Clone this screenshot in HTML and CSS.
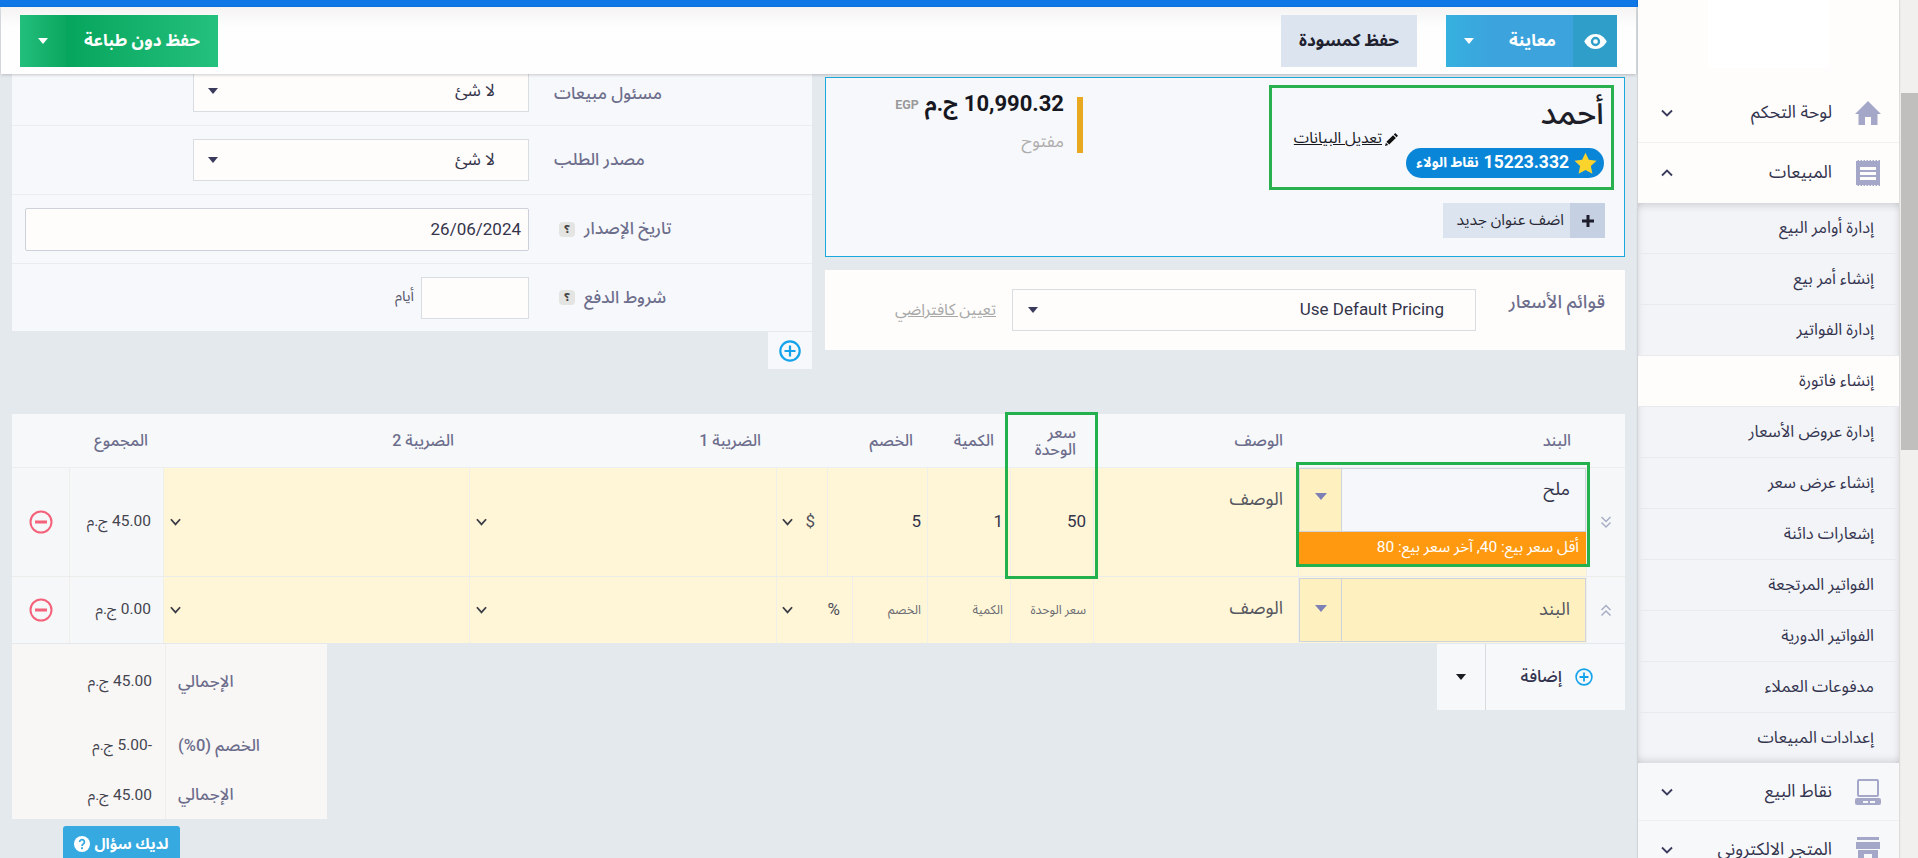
FILE: index.html
```html
<!DOCTYPE html>
<html lang="ar" dir="rtl">
<head>
<meta charset="utf-8">
<title>إنشاء فاتورة</title>
<link rel="stylesheet" href="styles.css">
</head>
<body>
<div class="app">
  <div class="scrollbar">
    <div class="scroll-up"></div>
    <div class="scroll-thumb"></div>
    <div class="scroll-down"><span class="caret caret-gray"></span></div>
  </div>

  <nav class="sidebar">
    <div class="logo-box"></div>
    <a class="nav-row">
      <svg class="nav-icon" viewBox="0 0 26 24"><path fill="#a5a7c8" d="M13 0 26 13h-3.500v11H16v-8h-6v8H3.500V13H0z"/></svg>
      <span class="nav-text">لوحة التحكم</span>
      <svg class="nav-chev" viewBox="0 0 12 8"><path d="M1 1.500 6 6.500l5-5" fill="none" stroke="#3a3a5c" stroke-width="1.800"/></svg>
    </a>
    <a class="nav-row nav-row-open">
      <svg class="nav-icon" viewBox="0 0 24 26"><path fill="#a5a7c8" d="M0 1h1.500V0H3v1h1.500V0H6v1h1.500V0H9v1h1.500V0H12v1h1.500V0H15v1h1.500V0H18v1h1.500V0H21v1h1.500V0H24v26h-1.500v-1H21v1h-1.500v-1H18v1h-1.500v-1H15v1h-1.500v-1H12v1h-1.500v-1H9v1H7.500v-1H6v1H4.500v-1H3v1H1.500v-1H0z"/><path fill="#fefdfb" d="M4 7h16v3H4zM4 12h16v3H4zM4 17h16v3H4z"/></svg>
      <span class="nav-text">المبيعات</span>
      <svg class="nav-chev" viewBox="0 0 12 8"><path d="M1 6.500 6 1.500l5 5" fill="none" stroke="#3a3a5c" stroke-width="1.800"/></svg>
    </a>
    <div class="subnav">
      <a class="sub-item">إدارة أوامر البيع</a>
      <a class="sub-item">إنشاء أمر بيع</a>
      <a class="sub-item">إدارة الفواتير</a>
      <a class="sub-item sub-active">إنشاء فاتورة</a>
      <a class="sub-item">إدارة عروض الأسعار</a>
      <a class="sub-item">إنشاء عرض سعر</a>
      <a class="sub-item">إشعارات دائنة</a>
      <a class="sub-item">الفواتير المرتجعة</a>
      <a class="sub-item">الفواتير الدورية</a>
      <a class="sub-item">مدفوعات العملاء</a>
      <a class="sub-item">إعدادات المبيعات</a>
    </div>
    <a class="nav-row nav-row-alt">
      <svg class="nav-icon" viewBox="0 0 26 26"><path fill="#a5a7c8" d="M4 0h18a2 2 0 0 1 2 2v14a2 2 0 0 1-2 2H4a2 2 0 0 1-2-2V2a2 2 0 0 1 2-2zm0 2v14h18V2zM2 19h22a2 2 0 0 1 2 2v3a2 2 0 0 1-2 2H2a2 2 0 0 1-2-2v-3a2 2 0 0 1 2-2zm6 3v2h5v-2zm7 0v2h5v-2z" fill-rule="evenodd"/></svg>
      <span class="nav-text">نقاط البيع</span>
      <svg class="nav-chev" viewBox="0 0 12 8"><path d="M1 1.500 6 6.500l5-5" fill="none" stroke="#3a3a5c" stroke-width="1.800"/></svg>
    </a>
    <a class="nav-row nav-row-alt">
      <svg class="nav-icon" viewBox="0 0 24 26"><path fill="#a5a7c8" d="M1 0h22v3H1zM0 5h24v7H0zM2 13h20v13h-6v-9H8v9H2z"/></svg>
      <span class="nav-text">المتجر الالكتروني</span>
      <svg class="nav-chev" viewBox="0 0 12 8"><path d="M1 1.500 6 6.500l5-5" fill="none" stroke="#3a3a5c" stroke-width="1.800"/></svg>
    </a>
  </nav>

  <main class="main">
    <div class="top-line"></div>
    <header class="toolbar">
      <div class="btn-split btn-preview">
        <span class="btn-eye">
          <svg class="eye-icon" viewBox="0 0 24 16"><path fill="#fff" fill-rule="evenodd" d="M12 0c5.500 0 9.700 3.700 12 8-2.300 4.300-6.500 8-12 8S2.300 12.300 0 8c2.300-4.300 6.500-8 12-8zm0 3a5 5 0 1 0 0 10 5 5 0 0 0 0-10zm0 2.500a2.500 2.500 0 1 1 0 5 2.500 2.500 0 0 1 0-5z"/></svg>
        </span>
        <span class="btn-preview-main">معاينة</span>
        <span class="btn-preview-drop"><span class="caret caret-white"></span></span>
      </div>
      <div class="btn-draft">حفظ كمسودة</div>
      <div class="btn-split btn-save">
        <span class="btn-save-main">حفظ دون طباعة</span>
        <span class="btn-save-drop"><span class="caret caret-white"></span></span>
      </div>
    </header>

    <section class="top-grid">
      <div class="col-customer">
        <div class="customer-panel">
          <div class="customer-side">
            <div class="customer-box">
              <div class="customer-name">أحمد</div>
              <a class="edit-link">
                <svg class="pencil" viewBox="0 0 14 14"><path fill="#111" d="M11 0l3 3-1.500 1.500-3-3zM8.700 2.300l3 3L4.500 12.500l-3-3zM1 10.500 3.500 13 0 14z"/></svg>
                <span class="edit-text">تعديل البيانات</span>
              </a>
              <div class="points-pill">
                <svg class="star" viewBox="0 0 24 24"><path fill="#fbd32d" d="M12 .8l3.500 7.400 8 1-5.900 5.500 1.600 8L12 18.700l-7.200 4 1.600-8L.5 9.200l8-1z"/></svg>
                <span class="points-num">15223.332</span>
                <span class="points-word">نقاط الولاء</span>
              </div>
            </div>
            <div class="add-address">
              <span class="add-address-plus">
                <svg class="plus-black" viewBox="0 0 12 12"><path fill="#1d1d2b" d="M4.500 0h3v4.500H12v3H7.500V12h-3V7.500H0v-3h4.500z"/></svg>
              </span>
              <span class="add-address-text">اضف عنوان جديد</span>
            </div>
          </div>
          <div class="amount-block">
            <div class="amount-line"><span class="amount">10,990.32 ج.م</span><span class="amount-cur">EGP</span></div>
            <div class="amount-status">مفتوح</div>
          </div>
        </div>
        <div class="pricelist-panel">
          <div class="pricelist-label">قوائم الأسعار</div>
          <div class="field-select pricelist-select"><span>Use Default Pricing</span><span class="caret caret-dark"></span></div>
          <a class="set-default">تعيين كافتراضي</a>
        </div>
      </div>

      <div class="col-meta">
        <div class="meta-panel">
          <div class="meta-row meta-row-first">
            <label class="meta-label">مسئول مبيعات</label>
            <div class="field-select meta-select"><span>لا شئ</span><span class="caret caret-dark"></span></div>
          </div>
          <div class="meta-row">
            <label class="meta-label">مصدر الطلب</label>
            <div class="field-select meta-select"><span>لا شئ</span><span class="caret caret-dark"></span></div>
          </div>
          <div class="meta-row">
            <label class="meta-label">تاريخ الإصدار <span class="help-chip">؟</span></label>
            <div class="date-input">26/06/2024</div>
          </div>
          <div class="meta-row meta-row-last">
            <label class="meta-label">شروط الدفع <span class="help-chip">؟</span></label>
            <div class="days-input"></div>
            <span class="days-unit">أيام</span>
          </div>
        </div>
        <div class="meta-add">
          <svg class="circle-plus" viewBox="0 0 20 20"><circle cx="10" cy="10" r="8.800" fill="none" stroke="#14a3ea" stroke-width="2"/><path fill="#14a3ea" d="M9 5h2v4h4v2h-4v4H9v-4H5V9h4z"/></svg>
        </div>
      </div>
    </section>

    <section class="table-wrap">
      <div class="t-row t-head">
        <div class="c"></div>
        <div class="c h">البند</div>
        <div class="c h">الوصف</div>
        <div class="c h h-price">سعر<br>الوحدة</div>
        <div class="c h h-qty">الكمية</div>
        <div class="c h h-disc">الخصم</div>
        <div class="c h">الضريبة 1</div>
        <div class="c h">الضريبة 2</div>
        <div class="c h">المجموع</div>
        <div class="c"></div>
      </div>

      <div class="t-row t-row-1">
        <div class="c handle"><svg class="dbl" viewBox="0 0 12 14"><path d="M1.500 2 6 6.500 10.500 2M1.500 7.500 6 12l4.500-4.500" fill="none" stroke="#a8aec6" stroke-width="1.500"/></svg></div>
        <div class="c item-cell">
          <div class="item-input item-filled">
            <span class="item-text">ملح</span>
            <span class="item-drop"><span class="caret caret-blue"></span></span>
          </div>
          <div class="item-hint">أقل سعر بيع: 40, آخر سعر بيع: 80</div>
        </div>
        <div class="c y v-desc">الوصف</div>
        <div class="c y v-num">50</div>
        <div class="c y v-num">1</div>
        <div class="c y disc-cell">
          <div class="disc-val">5</div>
          <div class="disc-type disc-type-a"><span class="disc-sym">$</span><svg class="sel-chev" viewBox="0 0 12 8"><path d="M1 1 6 6.500 11 1" fill="none" stroke="#3d3d48" stroke-width="2"/></svg></div>
        </div>
        <div class="c y tax"><svg class="sel-chev" viewBox="0 0 12 8"><path d="M1 1 6 6.500 11 1" fill="none" stroke="#3d3d48" stroke-width="2"/></svg></div>
        <div class="c y tax"><svg class="sel-chev" viewBox="0 0 12 8"><path d="M1 1 6 6.500 11 1" fill="none" stroke="#3d3d48" stroke-width="2"/></svg></div>
        <div class="c total">45.00 ج.م</div>
        <div class="c del"><svg class="minus" viewBox="0 0 24 24"><circle cx="12" cy="12" r="10.500" fill="none" stroke="#f4617a" stroke-width="2"/><path fill="#f4617a" d="M6 10.500h12v3H6z"/></svg></div>
      </div>

      <div class="t-row t-row-2">
        <div class="c handle"><svg class="dbl" viewBox="0 0 12 14"><path d="M1.500 7 6 2.500 10.500 7M1.500 12.500 6 8l4.500 4.500" fill="none" stroke="#a8aec6" stroke-width="1.500"/></svg></div>
        <div class="c item-cell">
          <div class="item-input item-empty">
            <span class="item-text item-ph">البند</span>
            <span class="item-drop"><span class="caret caret-blue"></span></span>
          </div>
        </div>
        <div class="c y v-desc">الوصف</div>
        <div class="c y v-ph">سعر الوحدة</div>
        <div class="c y v-ph">الكمية</div>
        <div class="c y disc-cell">
          <div class="disc-val disc-val-2">الخصم</div>
          <div class="disc-type disc-type-b"><span class="disc-sym">%</span><svg class="sel-chev" viewBox="0 0 12 8"><path d="M1 1 6 6.500 11 1" fill="none" stroke="#3d3d48" stroke-width="2"/></svg></div>
        </div>
        <div class="c y tax"><svg class="sel-chev" viewBox="0 0 12 8"><path d="M1 1 6 6.500 11 1" fill="none" stroke="#3d3d48" stroke-width="2"/></svg></div>
        <div class="c y tax"><svg class="sel-chev" viewBox="0 0 12 8"><path d="M1 1 6 6.500 11 1" fill="none" stroke="#3d3d48" stroke-width="2"/></svg></div>
        <div class="c total">0.00 ج.م</div>
        <div class="c del"><svg class="minus" viewBox="0 0 24 24"><circle cx="12" cy="12" r="10.500" fill="none" stroke="#f4617a" stroke-width="2"/><path fill="#f4617a" d="M6 10.500h12v3H6z"/></svg></div>
      </div>

      <div class="mark mark-price"></div>
      <div class="mark mark-item"></div>
    </section>

    <section class="below">
      <div class="add-btn">
        <span class="add-main">
          <svg class="circle-plus-sm" viewBox="0 0 20 20"><circle cx="10" cy="10" r="8.800" fill="none" stroke="#14a3ea" stroke-width="1.800"/><path fill="#14a3ea" d="M9 5h2v4h4v2h-4v4H9v-4H5V9h4z"/></svg>
          إضافة
        </span>
        <span class="add-drop"><span class="caret caret-black"></span></span>
      </div>
      <div class="totals">
        <div class="tot-label tot-h1">الإجمالي</div><div class="tot-val tot-h1">45.00 ج.م</div>
        <div class="tot-label tot-h2">الخصم (0%)</div><div class="tot-val tot-h2">-5.00 ج.م</div>
        <div class="tot-label tot-h3">الإجمالي</div><div class="tot-val tot-h3">45.00 ج.م</div>
      </div>
    </section>

    <div class="help-row">
      <a class="help-btn">
        <span>لديك سؤال</span>
        <svg class="help-icon" viewBox="0 0 20 20"><circle cx="10" cy="10" r="10" fill="#fff"/><path d="M7 7.500a3 3 0 1 1 4.600 2.500c-1 .7-1.600 1.200-1.600 2.500" fill="none" stroke="#35a9e0" stroke-width="2.200"/><rect x="8.800" y="14" width="2.400" height="2.400" fill="#35a9e0"/></svg>
      </a>
    </div>
  </main>
</div>
</body>
</html>
```
FILE: styles.css
```css
* { box-sizing: border-box; }
html, body { margin: 0; height: 858px; overflow: hidden; }
body { font-family: Roboto, "Noto Sans Arabic", sans-serif; font-size: 16px; line-height: 1.25; color: #33334f; background: #e4e9ed; }
a { display: block; text-decoration: none; color: inherit; }

.app { display: grid; grid-template-columns: 19px 261px 1638px; height: 858px; overflow: hidden; }

/* scrollbar */
.scrollbar { background: #f1f0ef; display: flex; flex-direction: column; }
.scroll-up { height: 93px; }
.scroll-thumb { height: 357px; background: #c1bfbd; width: 17px; }
.scroll-down { margin-top: auto; height: 17px; display: flex; align-items: center; justify-content: center; }

/* carets */
.caret { display: inline-block; width: 0; height: 0; border-style: solid; border-width: 6px 5px 0; border-color: #3a3a5c transparent transparent; flex: none; }
.caret-white { border-top-color: #fff; }
.caret-dark { border-top-color: #3a3a5c; }
.caret-black { border-top-color: #1b1b22; }
.caret-blue { border-top-color: #7d80b5; border-width: 7px 6px 0; }
.caret-gray { border-top-color: #555; }

/* sidebar */
.sidebar { background: #fefdfb; box-shadow: 0 0 2px rgba(0,0,0,.25); position: relative; z-index: 3; }
.logo-box { width: 121px; height: 68px; background: #fff; margin: 0 auto 15px; }
.nav-row { height: 60px; display: flex; align-items: center; padding-right: 18px; padding-left: 23px; border-bottom: 1px solid #f0f0f0; }
.nav-row-open { border-bottom: 0; }
.nav-row-alt { background: #f7f8fa; height: 58px; }
.nav-icon { width: 26px; height: 26px; flex: none; }
.nav-text { font-size: 17.500px; margin-right: 23px; color: #34344f; }
.nav-chev { width: 12px; height: 8px; margin-right: auto; }
.subnav { background: #f2f4f8; box-shadow: inset 0 8px 8px -6px rgba(0,0,0,.16), inset 0 -8px 8px -6px rgba(0,0,0,.14), inset 8px 0 8px -8px rgba(0,0,0,.1), inset -8px 0 8px -8px rgba(0,0,0,.1); }
.sub-item { height: 51px; display: flex; align-items: center; padding-right: 25px; font-size: 16.500px; border-bottom: 1px solid #e8eaee; color: #34344f; }
.sub-item:last-child { border-bottom: 0; height: 50px; }
.sub-active { background: #fefdfb; }

/* main */
.main { background: #e4e9ed; display: flex; flex-direction: column; height: 858px; overflow: hidden; }
.top-line { height: 7px; background: #0f77e6; flex: none; }
.toolbar { height: 67px; flex: none; margin: 0 2px 0 1px; padding: 8px 19px 0; background: linear-gradient(#f5f4f3, #fefefe 30%); box-shadow: 0 1px 3px rgba(0,0,0,.2); display: flex; position: relative; z-index: 2; align-items: flex-start; }
.btn-split { display: flex; height: 52px; font-weight: 700; color: #fff; font-size: 17px; }
.btn-split > span { display: flex; align-items: center; justify-content: center; }
.btn-eye { width: 44px; background: #2f9fc9; }
.eye-icon { width: 23px; height: 15px; }
.btn-preview-main { width: 81px; background: #3ca3dc; }
.btn-preview-drop { width: 46px; background: linear-gradient(to left, #3ca3dc, #35b1df); }
.btn-draft { width: 136px; height: 52px; margin-right: 29px; background: #dbe4ef; color: #20202e; font-weight: 700; font-size: 17px; display: flex; align-items: center; justify-content: center; }
.btn-save { margin-right: auto; }
.btn-save-main { width: 152px; background: linear-gradient(to left, #24c07d, #06a55c); }
.btn-save-drop { width: 46px; background: linear-gradient(to left, #0ba65f, #22bf7c); }

/* top grid */
.top-grid { display: grid; grid-template-columns: 800px 800px; gap: 13px; padding: 0 13px 0 12px; flex: none; height: 295px; }
.col-customer { padding-top: 3px; }
.customer-panel { height: 180px; border: 1px solid #1aa9dd; background: #f6f8fb; padding: 7px 10px 0 0; display: flex; align-items: flex-start; }
.customer-side { width: 345px; flex: none; }
.customer-box { height: 105px; border: 3px solid #2ab04f; padding: 3px 7px 0 0; }
.customer-name { font-size: 32px; font-weight: 500; line-height: 44px; color: #1e1e28; height: 38px; }
.edit-link { display: flex; align-items: center; gap: 3px; margin-right: 206px; height: 20px; font-size: 15.500px; color: #17171f; }
.edit-text { text-decoration: underline; white-space: nowrap; }
.pencil { width: 13px; height: 13px; flex: none; }
.points-pill { display: inline-flex; align-items: center; height: 30px; width: 198px; border-radius: 15px; background: #0a86d8; color: #fff; font-weight: 700; padding: 0 7px; white-space: nowrap; margin-top: -1px; }
.points-num { font-size: 17.500px; margin: 0 5px; }
.points-word { font-size: 14px; }
.star { width: 23px; height: 23px; flex: none; }
.add-address { margin: 13px 9px 0 0; width: 162px; height: 35px; background: #dbe4ef; display: flex; align-items: center; font-size: 15.500px; color: #2a2a36; }
.add-address-plus { width: 35px; height: 35px; background: #c5d1e3; display: flex; align-items: center; justify-content: center; flex: none; }
.plus-black { width: 12px; height: 12px; }
.add-address-text { margin-right: 6px; white-space: nowrap; }
.amount-block { margin: 12px 186px 0 0; height: 56px; border-right: 6px solid #e8a820; padding-right: 13px; }
.amount-line { display: flex; align-items: flex-start; gap: 6px; height: 32px; white-space: nowrap; }
.amount { font-size: 22px; font-weight: 700; line-height: 22px; color: #17171f; margin-top: -4px; }
.amount-cur { font-size: 12.500px; font-weight: 700; color: #9a9a9a; }
.amount-status { color: #aeacac; font-size: 17px; margin-top: 2px; }

.pricelist-panel { margin-top: 13px; height: 80px; background: #fefdfc; display: flex; align-items: flex-start; padding-right: 20px; }
.pricelist-label { width: 129px; flex: none; margin-top: 21px; font-size: 18.500px; font-weight: 500; color: #6d6d8c; white-space: nowrap; }
.field-select { background: #fefdfc; border: 1px solid #d8dde2; height: 42px; display: flex; align-items: center; justify-content: space-between; font-size: 17px; color: #34344a; }
.pricelist-select { width: 464px; margin-top: 19px; padding: 0 31px 0 15px; }
.set-default { margin: 30px 16px 0 0; color: #a8a8a8; font-size: 16px; text-decoration: underline; white-space: nowrap; }

/* meta */
.meta-panel { background: #f6f8fb; height: 257px; }
.meta-row { height: 69px; display: flex; align-items: center; border-top: 1px solid #e9ecf0; }
.meta-row-first { height: 51px; border-top: 0; align-items: flex-end; padding-bottom: 13px; }
.meta-row-last { height: 68px; }
.meta-row-first .meta-label { margin-bottom: 8px; }
.meta-label { width: 283px; flex: none; display: flex; align-items: center; justify-content: flex-end; gap: 9px; padding-left: 25px; color: #6d6d8c; font-size: 17px; font-weight: 500; white-space: nowrap; }
.meta-select { width: 336px; flex: none; padding: 0 33px 0 14px; }
.help-chip { display: inline-block; width: 16px; height: 15px; line-height: 15px; border-radius: 4px; background: #e4e4e2; color: #444; text-align: center; font-size: 11px; font-weight: 700; margin-left: 5px; overflow: hidden; }
.date-input { width: 504px; height: 43px; background: #fefdfc; border: 1px solid #cdd1d9; border-radius: 2px; padding-right: 7px; line-height: 41px; font-size: 17px; color: #34344a; }
.days-input { width: 108px; height: 42px; background: #fefdfc; border: 1px solid #d8dde2; flex: none; }
.days-unit { margin-right: 7px; font-size: 14.500px; color: #55556a; }
.meta-add { width: 44px; height: 37px; margin-top: 1px; background: #f6f8fb; display: flex; align-items: center; justify-content: center; }
.circle-plus { width: 22px; height: 22px; }

/* table */
.table-wrap { position: relative; width: 1613px; margin: 45px 13px 0 0; flex: none; }
.t-row { display: grid; grid-template-columns: 39px 288px 205px 83px 83px 151px 307px 306px 94px 57px; }
.t-head { height: 54px; background: #f6f8fa; border-bottom: 1px solid #eceef0; }
.t-row-1 { height: 109px; border-bottom: 1px solid #ececea; }
.t-row-2 { height: 66px; }
.c { border-left: 1px solid #efeee8; min-width: 0; }
.t-head .c { border-left: 0; }
.h { display: flex; align-items: center; padding-right: 15px; font-size: 16px; font-weight: 500; color: #6d6d8c; line-height: 17px; white-space: nowrap; }
.h-price { padding-right: 17px; }
.h-qty { padding-right: 16px; }
.h-disc { padding-right: 14px; }
.y { background: #fff6d8; }
.handle, .total, .del { background: #f6f7f8; display: flex; align-items: center; }
.handle { justify-content: center; }
.dbl { width: 12px; height: 14px; }
.item-cell { background: #fff6d8; }
.item-input { height: 64px; display: flex; border: 1px solid #cfd3db; }
.item-filled { background: #f5f7fa; }
.item-empty { background: #fff1bf; margin-top: 1px; }
.item-text { flex: 1; padding: 9px 15px 0 0; font-size: 18px; color: #33334a; }
.item-ph { padding-top: 19px; color: #56565f; }
.item-drop { width: 42px; flex: none; background: #fff1bf; border-right: 1px solid #cfd3db; display: flex; align-items: center; justify-content: center; }
.t-row-1 .item-drop { padding-bottom: 8px; }
.t-row-2 .item-drop { padding-bottom: 4px; }
.item-hint { height: 32px; background: #ff9a10; color: #fff; font-size: 15.500px; line-height: 31px; padding-right: 7px; white-space: nowrap; overflow: hidden; }
.v-desc { padding: 20px 15px 0 0; font-size: 18px; color: #56565f; }
.v-num { display: flex; align-items: center; padding-right: 7px; font-size: 17px; color: #33334a; }
.v-ph { display: flex; align-items: center; padding-right: 7px; font-size: 12.500px; color: #6a6a70; white-space: nowrap; }
.disc-cell { display: flex; }
.disc-val { flex: 1; display: flex; align-items: center; padding-right: 6px; font-size: 17px; color: #33334a; border-left: 1px solid #efeee8; }
.disc-val-2 { font-size: 12.500px; color: #6a6a70; }
.disc-type { flex: none; display: flex; align-items: center; padding: 0 12px 0 5px; justify-content: space-between; font-size: 17px; color: #50505a; }
.disc-type-a { width: 50px; }
.disc-type-b { width: 75px; padding-left: 5px; }
.tax { display: flex; align-items: center; padding-left: 6px; justify-content: flex-end; }
.sel-chev { width: 11px; height: 8px; flex: none; }
.total { padding-right: 12px; font-size: 15.500px; color: #44444f; white-space: nowrap; }
.del { justify-content: center; border-left: 0; }
.minus { width: 24px; height: 24px; }
.mark { position: absolute; border: 3px solid #22b14c; pointer-events: none; }
.mark-price { right: 527px; top: -2px; width: 93px; height: 167px; }
.mark-item { right: 35px; top: 48px; width: 294px; height: 105px; }

/* below */
.below { display: flex; justify-content: space-between; align-items: flex-start; width: 1613px; margin: 1px 13px 0 0; flex: none; }
.add-btn { display: flex; height: 66px; width: 188px; background: #f6f8fa; }
.add-main { width: 140px; display: flex; align-items: center; gap: 13px; padding-right: 32px; border-left: 1px solid #d8dce0; font-size: 17px; font-weight: 500; color: #33334f; }
.circle-plus-sm { width: 18px; height: 18px; flex: none; }
.add-drop { flex: 1; display: flex; align-items: center; justify-content: center; }
.totals { width: 315px; background: #f8f7f6; display: grid; grid-template-columns: 162px 153px; }
.tot-label, .tot-val { display: flex; align-items: center; font-size: 15.500px; white-space: nowrap; }
.tot-label { color: #6d6d8c; justify-content: flex-end; padding-left: 12px; border-left: 1px solid #efeeec; font-weight: 500; font-size: 16.500px; }
.tot-val { padding-right: 13px; color: #44444f; }
.tot-h1 { height: 76px; }
.tot-h2 { height: 52px; }
.tot-h3 { height: 47px; }
.help-row { display: flex; justify-content: flex-end; padding-left: 63px; margin-top: 7px; }
.help-btn { width: 117px; height: 36px; background: #35a9e0; border-radius: 3px 3px 0 0; color: #fff; font-size: 15px; font-weight: 700; display: flex; align-items: center; justify-content: center; gap: 4px; }
.help-icon { width: 16px; height: 16px; }
```
